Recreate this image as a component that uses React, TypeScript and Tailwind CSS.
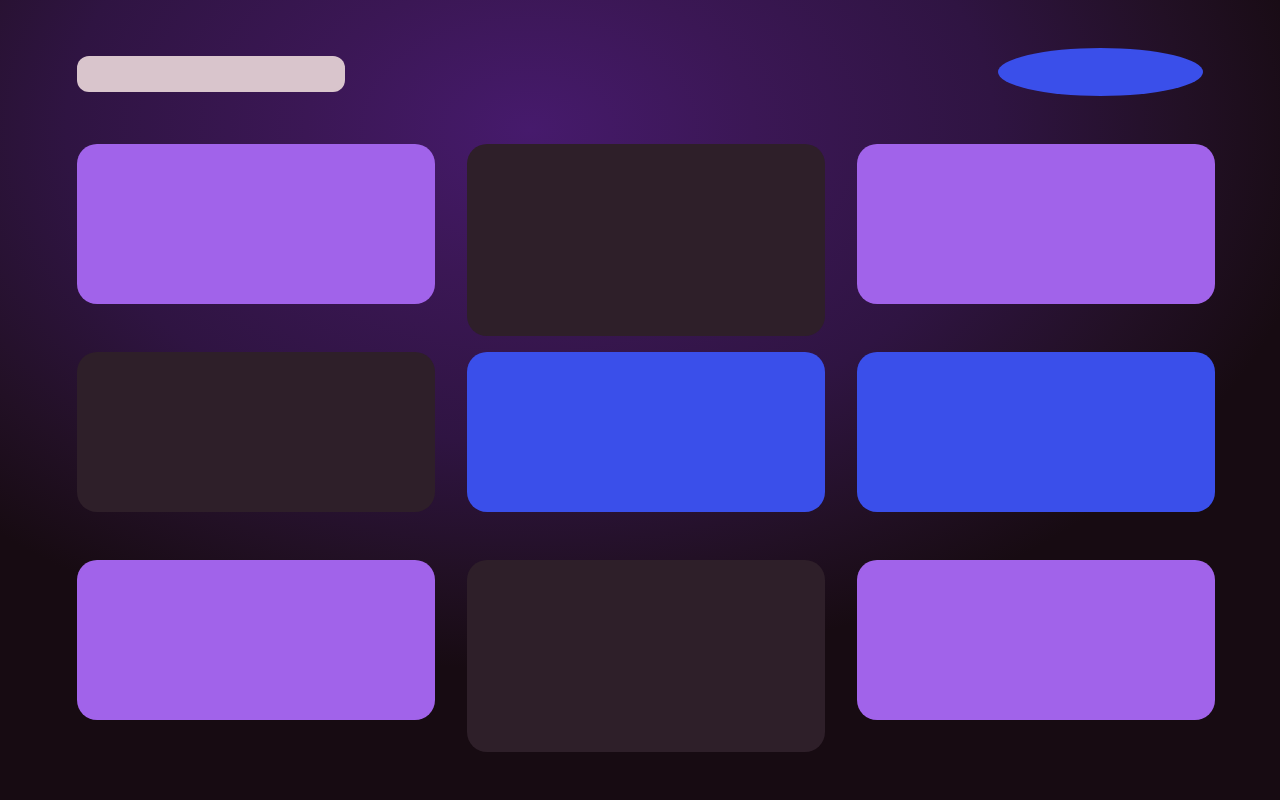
const PURPLE = 'bg-[#a163ea]';
const DARK = 'bg-[#2e1f29]';
const BLUE = 'bg-[#3a4fea]';

type Tile = { color: string; tall?: boolean };

const tiles: Tile[] = [
  { color: PURPLE },
  { color: DARK, tall: true },
  { color: PURPLE },
  { color: DARK },
  { color: BLUE },
  { color: BLUE },
  { color: PURPLE },
  { color: DARK, tall: true },
  { color: PURPLE },
];

export default function App() {
  return (
    <div className="w-[1280px] h-[800px] overflow-hidden bg-[#170b12] bg-[radial-gradient(ellipse_800px_540px_at_530px_130px,#461a6c_0%,#3b1755_28%,#2f1442_58%,#221025_82%,#170b12_100%)] font-['Liberation_Sans',sans-serif]">
      <div className="pl-[77px] pt-12 w-[1215px]">
        {/* header */}
        <div className="flex items-center justify-between h-12 pr-3">
          <div className="w-[268px] h-9 mt-[3px] rounded-xl bg-[#d9c5cc]" />
          <div className="w-[205px] h-12 rounded-[50%] bg-[#3a4fea]" />
        </div>

        {/* tiles */}
        <div className="mt-12 grid grid-cols-3 gap-x-8 gap-y-4 auto-rows-[192px] items-start">
          {tiles.map((t, i) => (
            <div
              key={i}
              className={`rounded-[20px] ${t.color} ${t.tall ? 'h-48' : 'h-40'}`}
            />
          ))}
        </div>
      </div>
    </div>
  );
}
